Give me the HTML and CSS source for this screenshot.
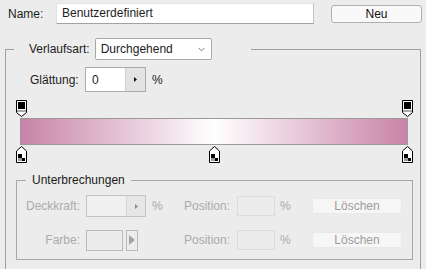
FILE: index.html
```html
<!DOCTYPE html>
<html>
<head>
<meta charset="utf-8">
<link rel="stylesheet" href="styles.css">
</head>
<body>
<div class="top">
  <span class="lbl name-lbl">Name:</span>
  <div class="name-input">Benutzerdefiniert</div>
  <button class="btn-neu">Neu</button>
</div>
<fieldset class="grad">
  <legend class="grad-legend">
    <span class="lbl">Verlaufsart:</span>
    <div class="select"><span>Durchgehend</span>
      <svg class="chev" width="7" height="5" viewBox="0 0 7 5"><path d="M0.5 0.8 L3.5 3.8 L6.5 0.8" fill="none" stroke="#7a7a7a" stroke-width="1"/></svg>
    </div>
  </legend>
  <div class="smooth">
    <span class="lbl smooth-lbl">Glättung:</span>
    <div class="spin"><span class="spin-val">0</span><span class="spin-btn"><svg width="3" height="5" viewBox="0 0 3 5"><path d="M0 0 L3 2.5 L0 5 Z" fill="#111"/></svg></span></div>
    <span class="lbl pct">%</span>
  </div>
  <div class="editor">
    <div class="stops">
      <svg class="stop" style="left:0%" width="11" height="17" viewBox="0 0 11 17"><path d="M0.5 0.5 H10.5 V12.5 L5.5 16.5 L0.5 12.5 Z" fill="#fff" stroke="#000"/><rect x="2" y="2" width="7" height="7" fill="#000"/><rect x="1" y="10" width="9" height="2" fill="#a9a9a9"/></svg>
      <svg class="stop" style="left:100%" width="11" height="17" viewBox="0 0 11 17"><path d="M0.5 0.5 H10.5 V12.5 L5.5 16.5 L0.5 12.5 Z" fill="#fff" stroke="#000"/><rect x="2" y="2" width="7" height="7" fill="#000"/><rect x="1" y="10" width="9" height="2" fill="#a9a9a9"/></svg>
    </div>
    <div class="bar"></div>
    <div class="stops bottom">
      <svg class="stop" style="left:0%" width="11" height="17" viewBox="0 0 11 17"><path d="M5.5 0.5 L10.5 5 V16.5 H0.5 V5 Z" fill="#fff" stroke="#000"/><rect x="2" y="8" width="7" height="7" fill="#9a9a9a"/><rect x="2" y="8" width="4" height="4" fill="#000"/><rect x="6" y="8" width="3" height="4" fill="#fff"/><rect x="6" y="12" width="3" height="3" fill="#000"/></svg>
      <svg class="stop" style="left:50%" width="11" height="17" viewBox="0 0 11 17"><path d="M5.5 0.5 L10.5 5 V16.5 H0.5 V5 Z" fill="#fff" stroke="#000"/><rect x="2" y="8" width="7" height="7" fill="#9a9a9a"/><rect x="2" y="8" width="4" height="4" fill="#000"/><rect x="6" y="8" width="3" height="4" fill="#fff"/><rect x="6" y="12" width="3" height="3" fill="#000"/></svg>
      <svg class="stop" style="left:100%" width="11" height="17" viewBox="0 0 11 17"><path d="M5.5 0.5 L10.5 5 V16.5 H0.5 V5 Z" fill="#fff" stroke="#000"/><rect x="2" y="8" width="7" height="7" fill="#9a9a9a"/><rect x="2" y="8" width="4" height="4" fill="#000"/><rect x="6" y="8" width="3" height="4" fill="#fff"/><rect x="6" y="12" width="3" height="3" fill="#000"/></svg>
    </div>
  </div>
  <fieldset class="stops-group">
    <legend class="sg-legend">Unterbrechungen</legend>
    <div class="srow first">
      <span class="slabel">Deckkraft:</span>
      <div class="ctrl">
        <div class="spin dis"><span class="spin-val"></span><span class="spin-btn"><svg width="3" height="5" viewBox="0 0 3 5"><path d="M0 0 L3 2.5 L0 5 Z" fill="#8a8a8a"/></svg></span></div>
        <span class="dpct">%</span>
      </div>
      <span class="poslabel">Position:</span>
      <div class="pos-input"></div>
      <span class="dpct2">%</span>
      <button class="btn-del">Löschen</button>
    </div>
    <div class="srow">
      <span class="slabel">Farbe:</span>
      <div class="ctrl">
        <div class="color-box"></div>
        <div class="color-arrow"><svg width="6" height="10" viewBox="0 0 6 10"><path d="M0 0 L6 5 L0 10 Z" fill="#a3a3a3"/></svg></div>
      </div>
      <span class="poslabel">Position:</span>
      <div class="pos-input"></div>
      <span class="dpct2">%</span>
      <button class="btn-del">Löschen</button>
    </div>
  </fieldset>
</fieldset>
</body>
</html>
```
FILE: styles.css
```css
html, body {
  margin: 0;
  padding: 0;
}
body {
  width: 426px;
  height: 269px;
  overflow: hidden;
  background: #ececec;
  font: 12px "Liberation Sans", Arial, sans-serif;
  color: #1c1c1c;
}
.top {
  display: flex;
  align-items: center;
  height: 21px;
  padding: 3px 0 0 8px;
}
.name-lbl {
  width: 48px;
}
.name-input {
  width: 258px;
  height: 21px;
  box-sizing: border-box;
  background: #fff;
  border: 1px solid #e2e2e2;
  border-bottom-color: #a2a2a2;
  border-right-color: #c4c4c4;
  padding-left: 5px;
  line-height: 19px;
}
.btn-neu {
  margin-left: 17px;
  width: 91px;
  height: 18px;
  padding: 0;
  border: 1px solid #b0b0b0;
  border-radius: 3px;
  background: #f9f9f9;
  font: inherit;
  color: #111;
  margin-top: 1px;
}
.grad {
  margin: 14px 5px 0 5px;
  padding: 0;
  border: 1px solid #a0a0a0;
  border-bottom: none;
  height: 231px;
  box-sizing: border-box;
  min-width: 0;
}
.grad-legend {
  margin-left: 8px;
  padding: 0 39px 0 15px;
  display: flex;
  align-items: center;
  gap: 5px;
}
.select {
  width: 117px;
  height: 22px;
  box-sizing: border-box;
  border: 1px solid #a8a8a8;
  border-radius: 2px;
  background: #fff;
  display: flex;
  align-items: center;
  justify-content: space-between;
  padding: 0 6px 0 5px;
}
.smooth {
  display: flex;
  align-items: center;
  height: 25px;
  margin-top: 7px;
  padding-left: 24px;
}
.smooth-lbl {
  width: 55px;
}
.spin {
  width: 61px;
  height: 25px;
  box-sizing: border-box;
  border: 1px solid #ababab;
  background: #fff;
  display: flex;
}
.spin-val {
  width: 39px;
  padding-left: 6px;
  box-sizing: border-box;
  display: flex;
  align-items: center;
}
.spin-btn {
  flex: 1;
  background: #e3e3e3;
  border-left: 1px solid #d0d0d0;
  display: flex;
  align-items: center;
  justify-content: center;
}
.pct {
  margin-left: 6px;
}
.editor {
  margin: 8px 0 0 14px;
  width: 388px;
}
.stops {
  position: relative;
  height: 18px;
  margin: 0 1px;
}
.stops.bottom {
  height: 17px;
  margin-top: 1px;
}
.stop {
  position: absolute;
  top: 0;
  margin-left: -5px;
  display: block;
}
.bar {
  height: 27px;
  box-sizing: border-box;
  border: 1px solid #9a9a9a;
  background: linear-gradient(to right, #c983a8, #ffffff 50%, #c983a8);
}
.stops-group {
  margin: 10px 0 0 10px;
  padding: 0;
  width: 397px;
  height: 87px;
  box-sizing: border-box;
  border: 1px solid #a6a6a6;
  min-width: 0;
}
.sg-legend {
  margin-left: 9px;
  padding: 0 6px;
  line-height: 14px;
  color: #1a1a1a;
}
.srow {
  display: flex;
  align-items: center;
  height: 22px;
  margin-top: 12px;
  color: #ababab;
}
.srow.first {
  margin-top: 8px;
}
.slabel {
  width: 63px;
  text-align: right;
  margin-right: 6px;
}
.ctrl {
  width: 98px;
  display: flex;
  align-items: center;
}
.spin.dis {
  width: 60px;
  height: 22px;
  border-color: #c4c4c4;
  background: #f0f0f0;
}
.spin.dis .spin-btn {
  background: #e6e6e6;
  border-left-color: #d6d6d6;
}
.dpct {
  margin-left: 6px;
}
.color-box {
  width: 37px;
  height: 21px;
  box-sizing: border-box;
  border: 1px solid #bababa;
}
.color-arrow {
  width: 12px;
  height: 21px;
  margin-left: 3px;
  box-sizing: border-box;
  border: 1px solid #bababa;
  display: flex;
  align-items: center;
  justify-content: center;
}
.poslabel {
  width: 53px;
}
.pos-input {
  width: 38px;
  height: 20px;
  box-sizing: border-box;
  border: 1px solid #dcdcdc;
}
.dpct2 {
  width: 32px;
  margin-left: 5px;
}
.btn-del {
  width: 90px;
  height: 16px;
  padding: 0;
  border: 1px solid #e9e9e9;
  border-radius: 3px;
  background: #f6f6f6;
  font: inherit;
  color: #9c9c9c;
}
```
